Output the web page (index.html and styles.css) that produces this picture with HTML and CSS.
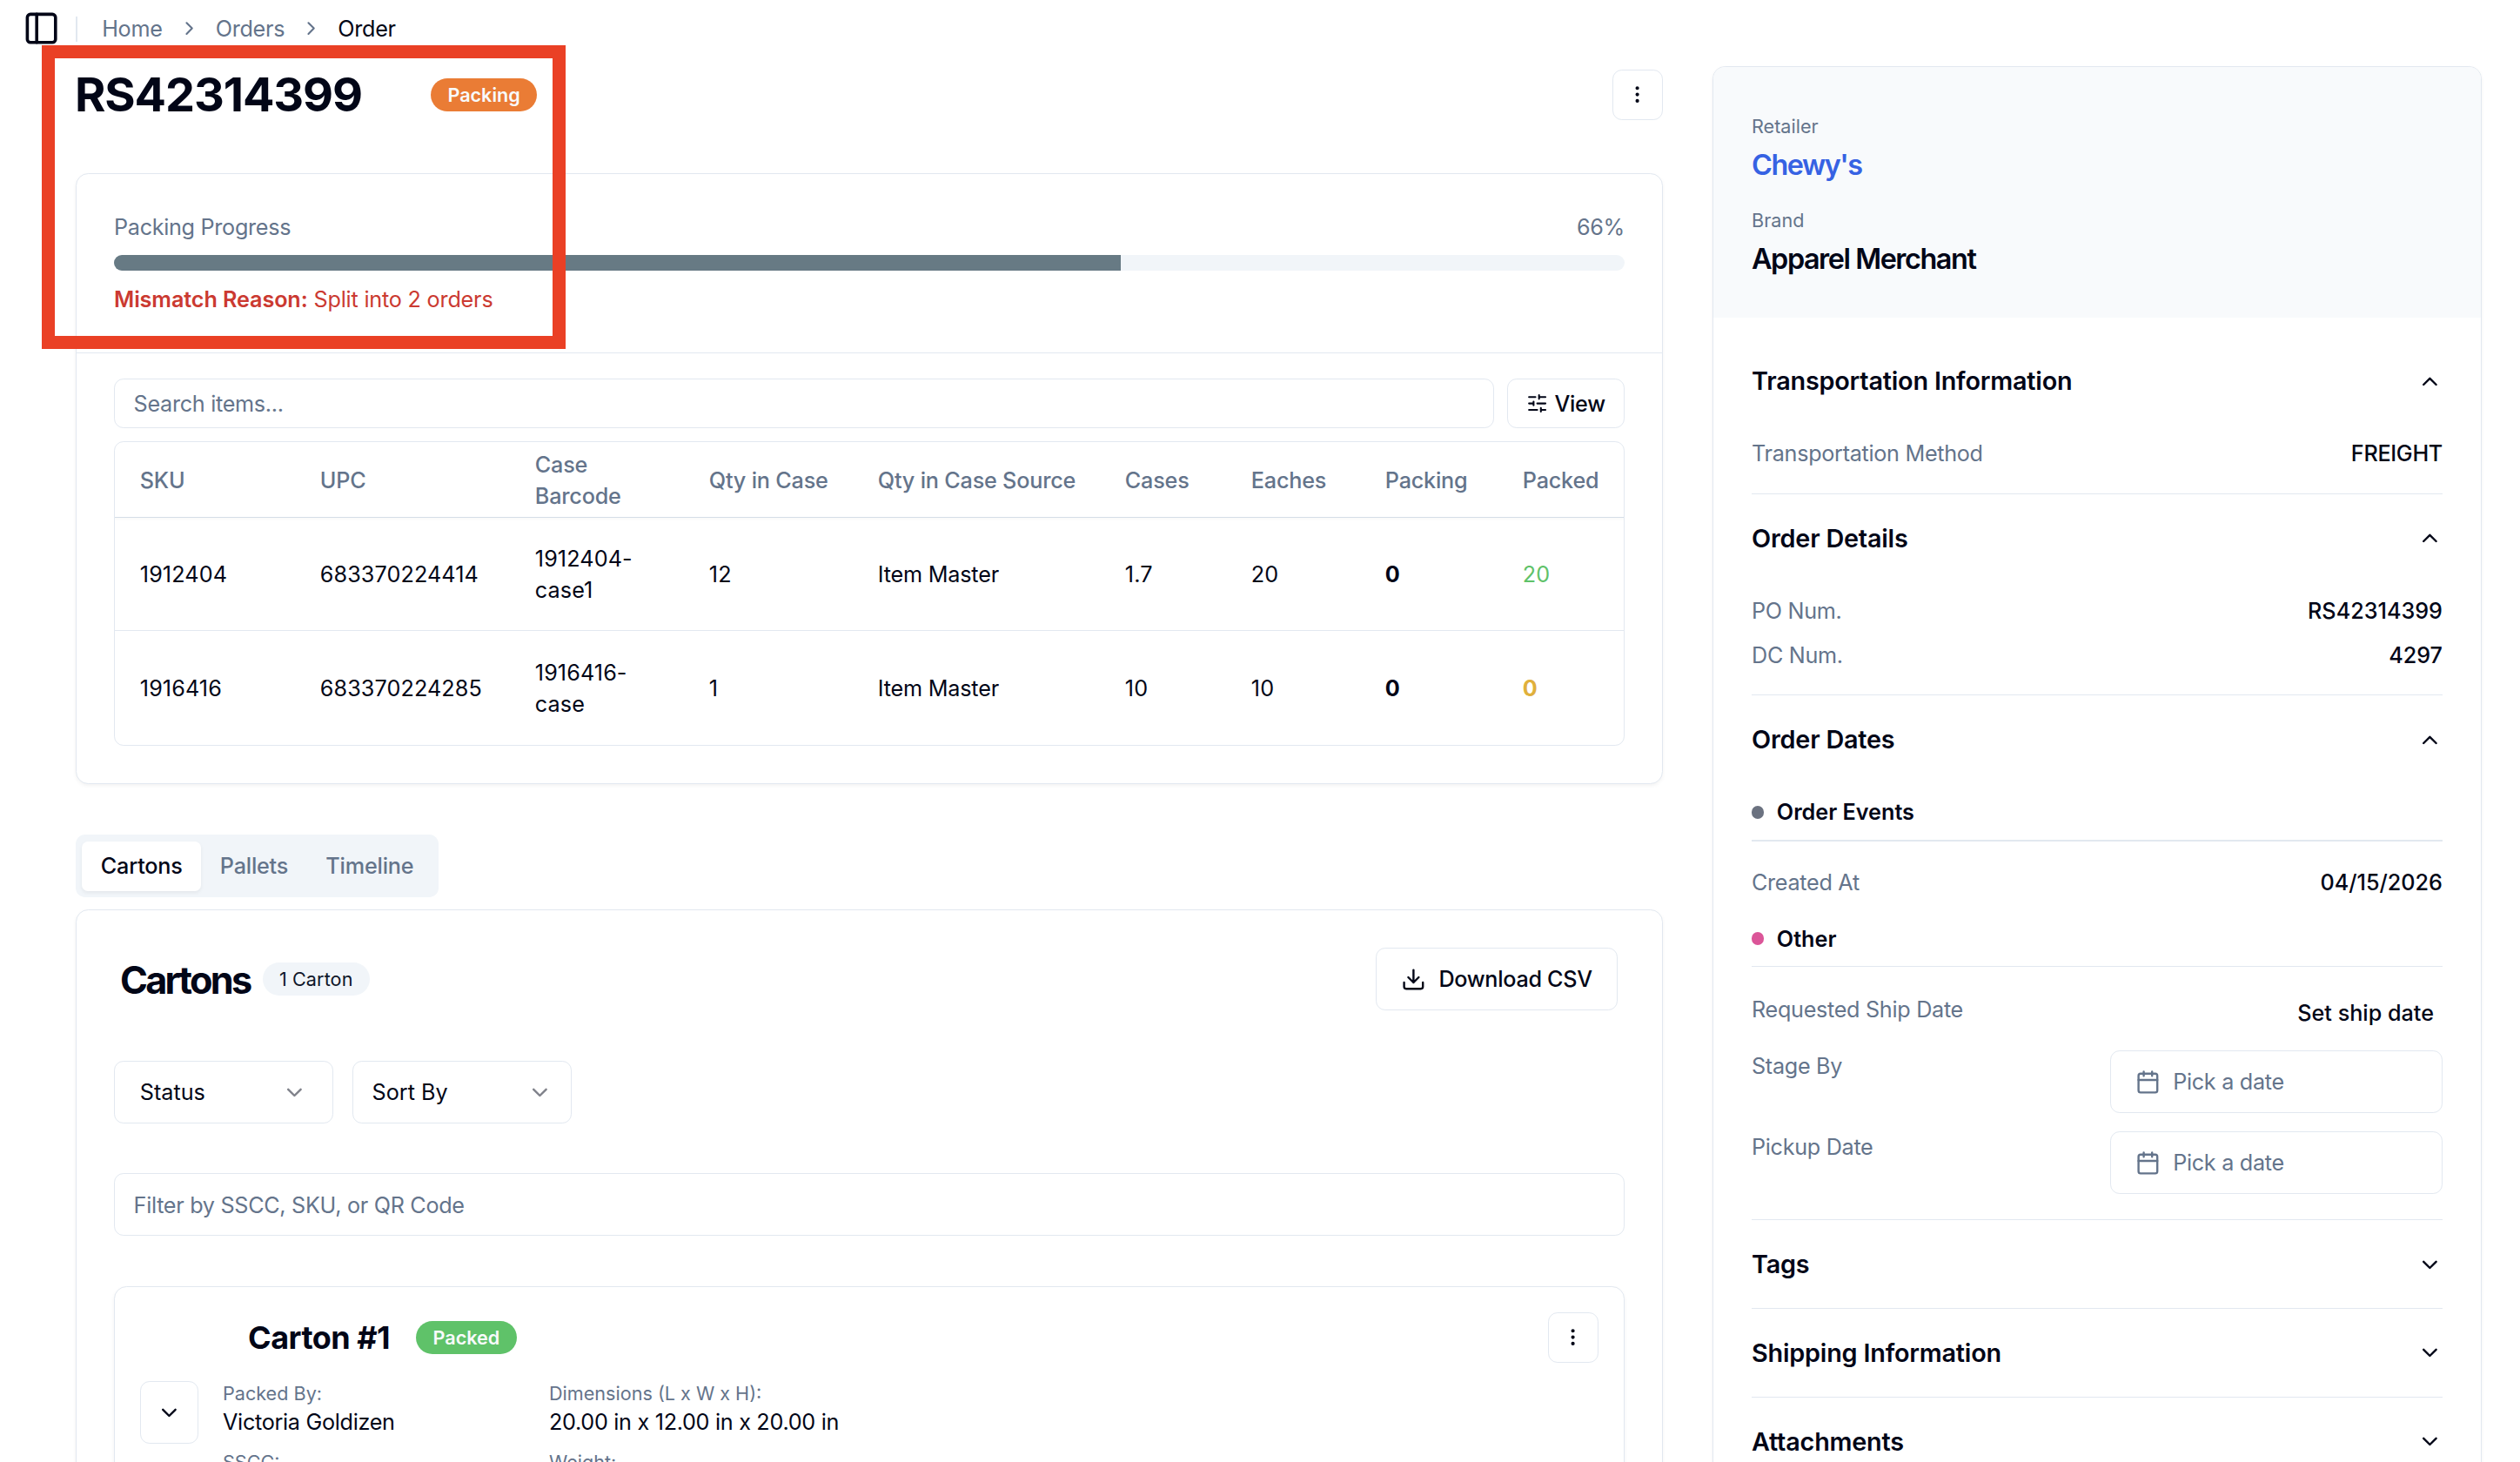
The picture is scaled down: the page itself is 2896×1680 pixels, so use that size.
FILE: index.html
```html
<!DOCTYPE html>
<html lang="en">
<head>
    <meta charset="UTF-8">
    <meta name="viewport" content="width=device-width, initial-scale=1.0">
    <title>Order RS42314399</title>
    <link rel="stylesheet" href="styles.css">
</head>
<body>
    <svg class="sprite" width="0" height="0">
        <symbol id="chevron-down" viewBox="0 0 24 24"><path d="m6 9 6 6 6-6"/></symbol>
        <symbol id="chevron-up" viewBox="0 0 24 24"><path d="m18 15-6-6-6 6"/></symbol>
        <symbol id="chevron-right" viewBox="0 0 24 24"><path d="m9 18 6-6-6-6"/></symbol>
        <symbol id="dots" viewBox="0 0 24 24"><circle cx="12" cy="5" r="1"/><circle cx="12" cy="12" r="1"/><circle cx="12" cy="19" r="1"/></symbol>
        <symbol id="calendar" viewBox="0 0 24 24"><path d="M8 2v4M16 2v4M3 10h18"/><rect x="3" y="4" width="18" height="18" rx="2"/></symbol>
    </svg>

    <header class="topbar">
        <svg class="icon panel-icon" viewBox="0 0 24 24"><rect x="3" y="3" width="18" height="18" rx="2"/><path d="M9 3v18"/></svg>
        <span class="separator"></span>
        <nav class="breadcrumb">
            <a>Home</a>
            <svg class="icon icon-sm"><use href="#chevron-right"/></svg>
            <a>Orders</a>
            <svg class="icon icon-sm"><use href="#chevron-right"/></svg>
            <span class="current">Order</span>
        </nav>
    </header>

    <div class="page">
        <main class="main">
            <div class="title-row">
                <h1>RS42314399</h1>
                <span class="badge badge-orange">Packing</span>
                <button class="btn btn-icon push"><svg class="icon icon-sm"><use href="#dots"/></svg></button>
            </div>

            <section class="card items-card">
                <div class="progress-section">
                    <div class="progress-label"><span>Packing Progress</span><span>66%</span></div>
                    <div class="progress"><div class="progress-fill" style="width: 66.66%"></div></div>
                    <p class="mismatch"><b>Mismatch Reason:</b> Split into 2 orders</p>
                </div>
                <div class="items-body">
                    <div class="toolbar">
                        <input class="input" type="text" placeholder="Search items...">
                        <button class="btn btn-view">
                            <svg class="icon icon-sm" viewBox="0 0 24 24"><path d="M10 5H3M12 19H3M14 3v4M16 17v4M21 12h-9M21 19h-5M21 5h-7M8 10v4M8 12H3"/></svg>
                            View
                        </button>
                    </div>
                    <div class="table-wrap">
                        <table class="items-table">
                            <colgroup>
                                <col class="c-sku"><col class="c-upc"><col class="c-barcode"><col class="c-qty"><col class="c-source"><col class="c-cases"><col class="c-eaches"><col class="c-packing"><col>
                            </colgroup>
                            <thead>
                                <tr>
                                    <th>SKU</th>
                                    <th>UPC</th>
                                    <th>Case<br>Barcode</th>
                                    <th>Qty in Case</th>
                                    <th>Qty in Case Source</th>
                                    <th>Cases</th>
                                    <th>Eaches</th>
                                    <th>Packing</th>
                                    <th>Packed</th>
                                </tr>
                            </thead>
                            <tbody>
                                <tr>
                                    <td>1912404</td>
                                    <td>683370224414</td>
                                    <td>1912404-<br>case1</td>
                                    <td>12</td>
                                    <td class="source">Item Master</td>
                                    <td>1.7</td>
                                    <td>20</td>
                                    <td class="strong">0</td>
                                    <td class="green">20</td>
                                </tr>
                                <tr>
                                    <td>1916416</td>
                                    <td>683370224285</td>
                                    <td>1916416-<br>case</td>
                                    <td>1</td>
                                    <td class="source">Item Master</td>
                                    <td>10</td>
                                    <td>10</td>
                                    <td class="strong">0</td>
                                    <td class="strong amber">0</td>
                                </tr>
                            </tbody>
                        </table>
                    </div>
                </div>
            </section>

            <div class="tabs">
                <button class="tab active">Cartons</button>
                <button class="tab">Pallets</button>
                <button class="tab">Timeline</button>
            </div>

            <section class="card cartons-card">
                <div class="cartons-header">
                    <h2>Cartons</h2>
                    <span class="badge badge-gray">1 Carton</span>
                    <button class="btn btn-download push">
                        <svg class="icon" viewBox="0 0 24 24"><path d="M21 15v4a2 2 0 0 1-2 2H5a2 2 0 0 1-2-2v-4M7 10l5 5 5-5M12 15V3"/></svg>
                        Download CSV
                    </button>
                </div>
                <div class="filters">
                    <button class="select select-status">Status <svg class="icon"><use href="#chevron-down"/></svg></button>
                    <button class="select">Sort By <svg class="icon"><use href="#chevron-down"/></svg></button>
                </div>
                <input class="input input-lg" type="text" placeholder="Filter by SSCC, SKU, or QR Code">

                <div class="card carton">
                    <div class="carton-title">
                        <h3>Carton #1</h3>
                        <span class="badge badge-green">Packed</span>
                        <button class="btn btn-icon push"><svg class="icon icon-sm"><use href="#dots"/></svg></button>
                    </div>
                    <div class="carton-body">
                        <button class="btn btn-expand"><svg class="icon"><use href="#chevron-down"/></svg></button>
                        <dl class="carton-details">
                            <div><dt>Packed By:</dt><dd>Victoria Goldizen</dd></div>
                            <div><dt>Dimensions (L x W x H):</dt><dd>20.00 in x 12.00 in x 20.00 in</dd></div>
                            <div><dt>SSCC:</dt></div>
                            <div><dt>Weight:</dt></div>
                        </dl>
                    </div>
                </div>
            </section>
        </main>

        <aside class="card sidebar">
            <div class="sidebar-header">
                <p class="label">Retailer</p>
                <p class="value link">Chewy's</p>
                <p class="label">Brand</p>
                <p class="value">Apparel Merchant</p>
            </div>
            <div class="sidebar-body">
                <section class="group">
                    <h4>Transportation Information <svg class="icon"><use href="#chevron-up"/></svg></h4>
                    <div class="rows">
                        <div class="row"><span>Transportation Method</span><b class="method">FREIGHT</b></div>
                    </div>
                </section>
                <section class="group">
                    <h4>Order Details <svg class="icon"><use href="#chevron-up"/></svg></h4>
                    <div class="rows">
                        <div class="row"><span>PO Num.</span><b>RS42314399</b></div>
                        <div class="row"><span>DC Num.</span><b>4297</b></div>
                    </div>
                </section>
                <section class="group">
                    <h4>Order Dates <svg class="icon"><use href="#chevron-up"/></svg></h4>
                    <div class="dates">
                        <h5><i class="dot dot-gray"></i>Order Events</h5>
                        <div class="row created"><span>Created At</span><b>04/15/2026</b></div>
                        <h5 class="other"><i class="dot dot-pink"></i>Other</h5>
                        <div class="date-rows">
                            <div class="row"><span>Requested Ship Date</span><button class="ship-date">Set ship date</button></div>
                            <div class="row"><span>Stage By</span><button class="date-picker"><svg class="icon"><use href="#calendar"/></svg>Pick a date</button></div>
                            <div class="row"><span>Pickup Date</span><button class="date-picker"><svg class="icon"><use href="#calendar"/></svg>Pick a date</button></div>
                        </div>
                    </div>
                </section>
                <section class="group">
                    <h4>Tags <svg class="icon"><use href="#chevron-down"/></svg></h4>
                </section>
                <section class="group">
                    <h4>Shipping Information <svg class="icon"><use href="#chevron-down"/></svg></h4>
                </section>
                <section class="group">
                    <h4>Attachments <svg class="icon"><use href="#chevron-down"/></svg></h4>
                </section>
            </div>
        </aside>
    </div>

    <div class="highlight"></div>
</body>
</html>
```

FILE: styles.css
```css
* {
    box-sizing: border-box;
    margin: 0;
    padding: 0;
}

body {
    position: relative;
    width: 2896px;
    height: 1680px;
    overflow: hidden;
    background: #fff;
    color: #020617;
    font-family: Inter, "Liberation Sans", sans-serif;
    font-size: 25.2px;
    letter-spacing: -0.3px;
    line-height: 36px;
}

button, input {
    font: inherit;
    letter-spacing: inherit;
    color: inherit;
    background: none;
    border: none;
}

.sprite {
    display: block;
}

.icon {
    width: 28.8px;
    height: 28.8px;
    flex-shrink: 0;
    fill: none;
    stroke: currentColor;
    stroke-width: 2;
    stroke-linecap: round;
    stroke-linejoin: round;
}

.icon-sm {
    width: 25.2px;
    height: 25.2px;
}

.push {
    margin-left: auto;
}

/* top bar */
.topbar {
    display: flex;
    align-items: center;
    height: 66px;
    padding-left: 26px;
}

.panel-icon {
    width: 43.2px;
    height: 43.2px;
}

.separator {
    width: 2px;
    height: 29px;
    margin: 0 28px 0 18px;
    background: #e2e8f0;
}

.breadcrumb {
    display: flex;
    align-items: center;
    gap: 18px;
    color: #64748b;
}

.breadcrumb .current {
    color: #020617;
}

/* layout */
.page {
    display: grid;
    grid-template-columns: 1824px 884px;
    column-gap: 57px;
    align-items: start;
    height: 1614px;
    padding-left: 87px;
    overflow: hidden;
}

.main {
    padding-top: 14px;
}

.card {
    border: 1px solid #e2e8f0;
    border-radius: 14.4px;
    background: #fff;
    box-shadow: 0 2px 4px rgba(0, 0, 0, 0.05);
}

.title-row {
    display: flex;
    align-items: center;
    height: 58px;
    margin-bottom: 61px;
}

h1 {
    width: 409px;
    margin-left: -1px;
    font-size: 54px;
    font-weight: 700;
    letter-spacing: -1.1px;
    line-height: 58px;
}

.badge {
    display: inline-flex;
    align-items: center;
    height: 38px;
    padding: 0 19.4px;
    border-radius: 19px;
    font-size: 21.6px;
    font-weight: 600;
    letter-spacing: 0;
    color: #f8fafc;
}

.badge-orange {
    background: #ea7c35;
}

.badge-green {
    background: #5fc269;
}

.badge-gray {
    background: #f1f5f9;
    color: #0f172a;
    font-weight: 400;
    letter-spacing: 0.1px;
}

.btn {
    display: flex;
    align-items: center;
    justify-content: center;
    border: 1px solid #e2e8f0;
    border-radius: 10.8px;
    font-weight: 500;
}

.btn-icon {
    width: 58px;
    height: 58px;
}

.input {
    border: 1px solid #e2e8f0;
    border-radius: 10.8px;
    padding: 0 21.6px;
}

.input::placeholder {
    color: #64748b;
    opacity: 1;
}

/* packing progress + items */
.progress-section {
    height: 206px;
    padding: 43px 43px 0;
    border-bottom: 1px solid #e2e8f0;
}

.progress-label {
    display: flex;
    justify-content: space-between;
    color: #64748b;
}

.progress {
    height: 18px;
    margin: 14px 0 15px;
    border-radius: 9px;
    background: #f1f5f9;
    overflow: hidden;
}

.progress-fill {
    height: 100%;
    background: #677a84;
}

.mismatch {
    color: #cb3a31;
    letter-spacing: -0.2px;
}

.mismatch b {
    font-weight: 600;
    letter-spacing: -0.1px;
}

.items-body {
    padding: 29px 43px 43px;
}

.toolbar {
    display: flex;
    gap: 15px;
    height: 57px;
    margin-bottom: 15px;
}

.toolbar .input {
    flex: 1;
}

.btn-view {
    width: 135px;
    gap: 7px;
}

.table-wrap {
    border: 1px solid #e2e8f0;
    border-radius: 10.8px;
    overflow: hidden;
}

.items-table {
    width: 100%;
    table-layout: fixed;
    border-collapse: separate;
    border-spacing: 0;
    text-align: left;
}

.items-table th {
    height: 87px;
    padding: 1px 0 0 28.8px;
    border-bottom: 1px solid #d5dde7;
    color: #64748b;
    font-weight: 500;
    letter-spacing: -0.2px;
}

.items-table td {
    height: 130px;
    padding: 0 0 0 28.8px;
    border-bottom: 1px solid #e2e8f0;
    letter-spacing: 0.1px;
}

.items-table .source {
    letter-spacing: -0.2px;
}

.items-table tbody tr:first-child td {
    background: linear-gradient(rgba(0, 0, 0, 0.025), transparent 4px);
}

.items-table tbody tr:last-child td {
    padding-top: 1px;
    height: 131px;
    border-bottom: none;
}

.c-sku { width: 207px; }
.c-upc { width: 247px; }
.c-barcode { width: 200px; }
.c-qty { width: 194px; }
.c-source { width: 284px; }
.c-cases { width: 145px; }
.c-eaches { width: 154px; }
.c-packing { width: 158px; }

.items-table .strong {
    font-weight: 700;
}

.items-table .green {
    color: #5fc269;
}

.items-table .amber {
    color: #e0b03c;
}

/* tabs */
.tabs {
    display: inline-flex;
    align-items: center;
    height: 72px;
    margin: 58px 0 14px;
    padding: 0 7.2px;
    border-radius: 10.8px;
    background: #f1f5f9;
    letter-spacing: -0.2px;
    vertical-align: top;
}

.tab {
    height: 57px;
    padding: 0 21.6px;
    border-radius: 7px;
    color: #64748b;
    font-weight: 500;
}

.tab.active {
    background: #fff;
    color: #020617;
    box-shadow: 0 2px 4px rgba(0, 0, 0, 0.06);
}

/* cartons */
.cartons-card {
    padding: 43px;
}

.cartons-header {
    display: flex;
    align-items: center;
    height: 72px;
    padding: 0 8px 0 7px;
}

h2 {
    margin-right: 14px;
    padding-top: 2px;
    font-size: 43.2px;
    font-weight: 700;
    letter-spacing: -2.7px;
    line-height: 44px;
}

.btn-download {
    width: 278px;
    height: 72px;
    gap: 14.4px;
}

.filters {
    display: flex;
    gap: 22px;
    margin: 58px 0 57px;
}

.select {
    display: flex;
    align-items: center;
    justify-content: space-between;
    width: 252px;
    height: 72px;
    padding: 0 21.6px;
    border: 1px solid #e2e8f0;
    border-radius: 10.8px;
    letter-spacing: 0;
}

.select-status {
    padding: 0 28.8px;
}

.select .icon {
    opacity: 0.5;
}

.input-lg {
    display: block;
    width: 100%;
    height: 72px;
    padding-top: 1px;
}

.carton {
    margin-top: 58px;
    padding: 29px;
}

.carton-title {
    display: flex;
    align-items: center;
    height: 58px;
    margin-bottom: 21px;
    padding-left: 124px;
}

h3 {
    margin-right: 30px;
    font-size: 36px;
    font-weight: 700;
    letter-spacing: -0.5px;
}

.carton-body {
    display: flex;
    align-items: flex-start;
    gap: 28px;
}

.btn-expand {
    width: 67px;
    height: 72px;
}

.carton-details {
    display: grid;
    grid-template-columns: 375px 1fr;
    row-gap: 14.4px;
    flex: 1;
}

.carton-details dt {
    color: #64748b;
    font-size: 21.6px;
    letter-spacing: 0;
    line-height: 28.8px;
}

/* right panel */
.sidebar {
    margin-top: 10px;
    height: 1700px;
    overflow: hidden;
}

.sidebar-header {
    height: 288px;
    padding: 54px 44px 0;
    background: #f8fafc;
}

.sidebar-header .label {
    color: #64748b;
    font-size: 21.6px;
    letter-spacing: 0;
    line-height: 29px;
}

.sidebar-header .value {
    margin: 5px 0 24px;
    font-size: 32.4px;
    font-weight: 600;
    letter-spacing: -1.45px;
    line-height: 50px;
}

.sidebar-header .link {
    color: #3662e3;
}

.sidebar-body {
    padding: 22px 44px 0;
}

.group {
    border-bottom: 1px solid #e2e8f0;
}

h4 {
    display: flex;
    align-items: center;
    justify-content: space-between;
    height: 100.8px;
    padding-top: 1px;
    font-size: 28.8px;
    font-weight: 600;
    letter-spacing: -0.2px;
}

.rows {
    display: flex;
    flex-direction: column;
    gap: 14.4px;
    padding: 15.4px 0 27.8px;
}

.row {
    display: flex;
    align-items: flex-start;
    justify-content: space-between;
}

.row span {
    color: #64748b;
}

.row b {
    font-weight: 500;
    letter-spacing: 0;
}

.row .method {
    letter-spacing: -0.3px;
}

.dates {
    padding: 15.2px 0 28.8px;
}

h5 {
    display: flex;
    align-items: center;
    gap: 14.4px;
    padding-bottom: 13.6px;
    border-bottom: 2px solid #e2e8f0;
    font-size: 25.2px;
    font-weight: 600;
    letter-spacing: 0;
}

.dot {
    width: 14.4px;
    height: 14.4px;
    border-radius: 50%;
}

.dot-gray {
    background: #6b7280;
}

.dot-pink {
    background: #db5598;
}

.created {
    margin: 28.8px 0;
}

.other {
    border-bottom-width: 1px;
}

.date-rows {
    display: flex;
    flex-direction: column;
    gap: 21.4px;
    padding-top: 30.4px;
}

.ship-date {
    height: 44px;
    padding-right: 10px;
    font-weight: 500;
    letter-spacing: 0;
}

.date-picker {
    display: flex;
    align-items: center;
    gap: 14.4px;
    width: 382px;
    height: 72px;
    padding-left: 28px;
    border: 1px solid #e2e8f0;
    border-radius: 10.8px;
    color: #64748b;
}

/* red callout drawn over the order header */
.highlight {
    position: absolute;
    left: 48px;
    top: 52px;
    width: 602px;
    height: 349px;
    border: 15px solid #ea4025;
}
```
